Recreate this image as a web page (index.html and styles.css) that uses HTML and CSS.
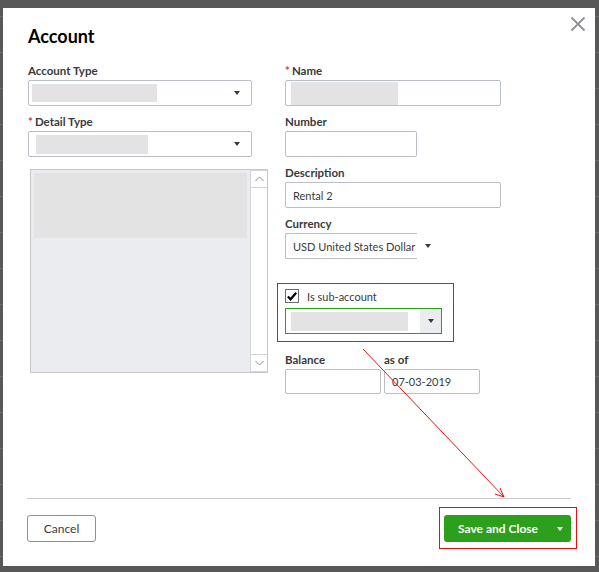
FILE: index.html
```html
<!DOCTYPE html>
<html lang="en">
<head>
  <meta charset="UTF-8" />
  <title>Account</title>
  <link rel="stylesheet" href="styles.css">
</head>
<body>

  <!-- Fenêtre Account -->
  <div class="modal">
    <div class="modal-head">
      <h1 class="title">Account</h1>
      <button class="close" aria-label="Close">
        <svg width="16" height="16" viewBox="0 0 16 16"><path d="M1.5 1.5 L14.5 14.5 M14.5 1.5 L1.5 14.5" stroke="#8d9096" stroke-width="1.8" fill="none"/></svg>
      </button>
    </div>

    <div class="form">
      <!-- colonne gauche -->
      <div class="col-left">
        <div class="group">
          <label>Account Type</label>
          <div class="select wide">
            <span class="ph ph-type"></span>
            <span class="caret"></span>
          </div>
        </div>
        <div class="group">
          <label><span class="req">*</span>Detail Type</label>
          <div class="select wide">
            <span class="ph ph-detail"></span>
            <span class="caret"></span>
          </div>
        </div>
        <div class="listbox">
          <div class="list-items">
            <div class="ph ph-list"></div>
          </div>
          <div class="scrollbar">
            <span class="sb-btn">
              <svg width="9" height="6" viewBox="0 0 9 6"><path d="M0.5 5 L4.5 1 L8.5 5" stroke="#8d9096" fill="none"/></svg>
            </span>
            <span class="sb-track"></span>
            <span class="sb-btn">
              <svg width="9" height="6" viewBox="0 0 9 6"><path d="M0.5 1 L4.5 5 L8.5 1" stroke="#8d9096" fill="none"/></svg>
            </span>
          </div>
        </div>
      </div>

      <!-- colonne droite -->
      <div class="col-right">
        <div class="group">
          <label><span class="req">*</span>Name</label>
          <div class="input long"><span class="ph ph-name"></span></div>
        </div>
        <div class="group">
          <label>Number</label>
          <div class="input short"></div>
        </div>
        <div class="group">
          <label>Description</label>
          <div class="input long">Rental 2</div>
        </div>
        <div class="group">
          <label>Currency</label>
          <div class="currency-row">
            <div class="input short open">USD United States Dollar</div>
            <span class="caret"></span>
          </div>
        </div>

        <div class="sub-box">
          <div class="check-row">
            <span class="checkbox">
              <svg width="13" height="13" viewBox="0 0 13 13"><path d="M2 6.5 L5 9.5 L11 2.5" stroke="#000" stroke-width="2.4" fill="none"/></svg>
            </span>
            <span>Is sub-account</span>
          </div>
          <div class="select green">
            <span class="ph ph-parent"></span>
            <span class="arrow-cell"><span class="caret"></span></span>
          </div>
        </div>

        <div class="balance-row">
          <div class="group">
            <label>Balance</label>
            <div class="input tiny"></div>
          </div>
          <div class="group">
            <label>as of</label>
            <div class="input tiny">07-03-2019</div>
          </div>
        </div>
      </div>
    </div>

    <div class="divider"></div>

    <div class="footer">
      <button class="btn-cancel">Cancel</button>
      <div class="save-box">
        <button class="btn-save">Save and Close <span class="caret white"></span></button>
      </div>
    </div>
  </div>

  <!-- annotations en rouge -->
  <svg class="annot" width="599" height="572" viewBox="0 0 599 572">
    <rect x="277.5" y="283.5" width="176" height="58" stroke="#ee1111" stroke-width="1" fill="none"/>
    <path d="M363 349 L504 497 M504 497 L495 494 M504 497 L500 488" stroke="#ee1111" stroke-width="1" fill="none"/>
  </svg>

</body>
</html>
```

FILE: styles.css
```css
body {
  margin: 0;
  width: 599px;
  height: 572px;
  overflow: hidden;
  position: relative;
  font-family: Lato, 'Liberation Sans', sans-serif;
  color: #393a3d;
  background-color: #585858;
  background-image: repeating-linear-gradient(to bottom, transparent 0, transparent 16px, #6a6a6a 16px, #6a6a6a 17px, transparent 17px, transparent 36px);
}

.modal {
  margin: 8px 0 0 3px;
  width: 592px;
  height: 558px;
  background: #fff;
  display: flex;
  flex-direction: column;
}

.modal-head {
  display: flex;
  justify-content: space-between;
  align-items: flex-start;
  padding: 8px 9px 0 25px;
}

.title {
  margin: 9px 0 0 0;
  font-size: 18px;
  line-height: 22px;
  font-weight: 700;
  color: #000;
}

.close {
  border: none;
  background: none;
  padding: 0;
  width: 16px;
  height: 16px;
  cursor: pointer;
}

.form {
  display: flex;
  gap: 17px;
  padding: 17px 0 0 25px;
}

.col-left {
  width: 240px;
}

.col-right {
  flex: 1;
}

.group {
  margin-bottom: 9px;
}

label {
  display: block;
  font-size: 11.5px;
  font-weight: 700;
  line-height: 14px;
  margin-bottom: 2px;
}

.req {
  color: #e0401c;
  margin-right: 2px;
}

.select, .input {
  position: relative;
  box-sizing: border-box;
  height: 26px;
  border: 1px solid #babec5;
  border-radius: 2px;
  font-size: 11px;
  display: flex;
  align-items: center;
}

.wide { width: 224px; }
.long { width: 216px; }
.short { width: 132px; }
.tiny { width: 96px; height: 25px; }

.input {
  padding-left: 7px;
}

.ph {
  display: block;
  background: #e3e3e3;
}

.ph-type { width: 125px; height: 18px; margin-left: 3px; }
.ph-detail { width: 112px; height: 19px; margin-left: 7px; }
.ph-name { width: 107px; height: 23px; margin-left: -2px; }
.ph-parent { width: 117px; height: 19px; margin-left: 5px; }

.caret {
  display: inline-block;
  width: 0;
  height: 0;
  border-left: 3.5px solid transparent;
  border-right: 3.5px solid transparent;
  border-top: 4px solid #393a3d;
}

.select .caret {
  margin-left: auto;
  margin-right: 11px;
}

.listbox {
  margin: 12px 0 0 2px;
  width: 238px;
  height: 204px;
  box-sizing: border-box;
  border: 1px solid #c6c7ca;
  display: flex;
  background: #ebecef;
}

.list-items {
  flex: 1;
  padding: 3px 3px 0 3px;
}

.ph-list {
  height: 65px;
}

.scrollbar {
  width: 16px;
  border-left: 1px solid #d4d5d8;
  background: #fff;
  display: flex;
  flex-direction: column;
}

.sb-btn {
  height: 16px;
  display: flex;
  align-items: center;
  justify-content: center;
  border-top: 1px solid #d4d5d8;
  border-bottom: 1px solid #d4d5d8;
}

.sb-track {
  flex: 1;
}

.currency-row {
  display: flex;
  align-items: center;
}

.open {
  border-right: none;
  border-radius: 2px 0 0 2px;
}

.currency-row .caret {
  margin-left: 8px;
}

/* le cadre rouge est dessiné dans le svg d'annotation */
.sub-box {
  margin: 24px 0 0 -8px;
  width: 177px;
  box-sizing: border-box;
  padding: 5px 13px 8px 8px;
}

.check-row {
  display: flex;
  align-items: center;
  gap: 8px;
  height: 16px;
  font-size: 11px;
  margin-bottom: 4px;
}

.checkbox {
  box-sizing: border-box;
  width: 14px;
  height: 14px;
  border: 1px solid #6b6c72;
  display: flex;
  align-items: center;
  justify-content: center;
}

.green {
  width: 157px;
  border-color: #2ca01c;
  border-radius: 0;
}

.arrow-cell {
  margin-left: auto;
  width: 21px;
  height: 100%;
  background: #ebecef;
  display: flex;
  align-items: center;
  justify-content: center;
}

.green .arrow-cell .caret {
  margin: 0;
}

.balance-row {
  display: flex;
  gap: 3px;
  margin-top: 11px;
}

.divider {
  margin: auto 24px 0 24px;
  border-top: 1px solid #cbcbcb;
}

.footer {
  display: flex;
  justify-content: space-between;
  align-items: center;
  padding: 8px 18px 17px 24px;
}

button {
  font-family: Lato, 'Liberation Sans', sans-serif;
}

.btn-cancel {
  width: 69px;
  height: 27px;
  background: #fff;
  border: 1px solid #8d9096;
  border-radius: 3px;
  font-size: 12px;
  color: #393a3d;
  padding: 0;
}

.save-box {
  border: 1px solid #e81010;
  padding: 7px 5px 6px 4px;
}

.btn-save {
  width: 127px;
  height: 27px;
  background: #2ca01c;
  border: none;
  border-radius: 3px;
  color: #fff;
  font-size: 12px;
  font-weight: 700;
  display: flex;
  align-items: center;
  padding: 0 8px 0 14px;
}

.caret.white {
  border-top-color: #fff;
  margin-left: auto;
}

.annot {
  position: absolute;
  left: 0;
  top: 0;
  pointer-events: none;
}
```
